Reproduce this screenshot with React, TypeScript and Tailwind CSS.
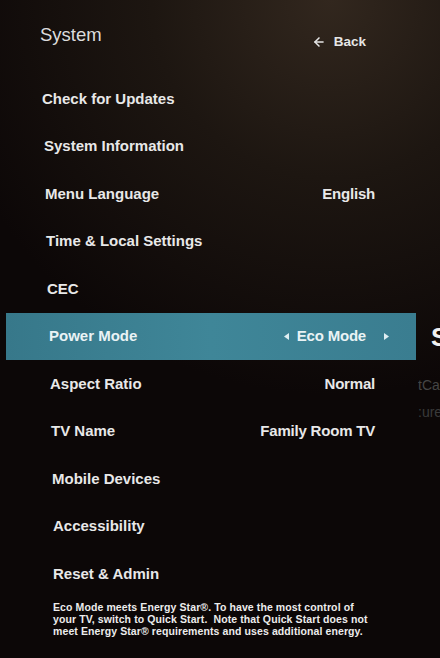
import React from "react";
import { ArrowLeft } from "lucide-react";

type Row = { label: string; value?: string; pl: string; selected?: boolean };

const rows: Row[] = [
  { label: "Check for Updates", pl: "pl-[36px]" },
  { label: "System Information", pl: "pl-[38px]" },
  { label: "Menu Language", value: "English", pl: "pl-[39px]" },
  { label: "Time & Local Settings", pl: "pl-[40px]" },
  { label: "CEC", pl: "pl-[41px]" },
  { label: "Power Mode", value: "Eco Mode", pl: "pl-[43px]", selected: true },
  { label: "Aspect Ratio", value: "Normal", pl: "pl-[44px]" },
  { label: "TV Name", value: "Family Room TV", pl: "pl-[45px]" },
  { label: "Mobile Devices", pl: "pl-[46px]" },
  { label: "Accessibility", pl: "pl-[47px]" },
  { label: "Reset & Admin", pl: "pl-[47px]" },
];

function Tri({ dir }: { dir: "l" | "r" }) {
  return (
    <svg width="5" height="7" viewBox="0 0 5 7" className="shrink-0">
      {dir === "l" ? (
        <polygon points="5,0 5,7 0,3.5" fill="#dfeef2" />
      ) : (
        <polygon points="0,0 0,7 5,3.5" fill="#dfeef2" />
      )}
    </svg>
  );
}

export default function App() {
  return (
    <div
      className="relative w-[440px] h-[658px] overflow-hidden bg-[radial-gradient(ellipse_90%_60%_at_75%_0%,#32271e_0%,#1d1611_45%,#0c0707_100%)] text-[#e8e8e8]"
      style={{ fontFamily: '"Liberation Sans", Arial, sans-serif' }}
    >
      <div className="flex items-start justify-between h-[75px] pl-[40px] pr-[74px] pt-[24px]">
        <div className="text-[18.5px] leading-[22px] text-[#dcdcdc]">System</div>
        <div className="flex items-center gap-[8px] pt-[8px] text-[13.5px] font-bold text-[#e6e6e6]">
          <ArrowLeft size={14} strokeWidth={2.6} />
          <span>Back</span>
        </div>
      </div>

      <div className="flex">
        <div className="ml-[6px] w-[410px] flex flex-col">
          {rows.map((r) => (
            <div
              key={r.label}
              className={
                "h-[47.5px] flex items-center justify-between text-[15px] font-bold " +
                r.pl +
                (r.selected
                  ? " bg-[linear-gradient(90deg,#37788a_0%,#3f8698_50%,#3a7d90_100%)] text-[#eaf3f5] pr-[27px]"
                  : " pr-[41px]")
              }
            >
              <span>{r.label}</span>
              {r.selected ? (
                <span className="flex items-center">
                  <Tri dir="l" />
                  <span className="ml-[8px] mr-[18px] tracking-[-0.2px]">{r.value}</span>
                  <Tri dir="r" />
                </span>
              ) : r.value ? (
                <span className="tracking-[-0.2px]">{r.value}</span>
              ) : null}
            </div>
          ))}
          <div className="pl-[47px] pt-[3px] text-[10.5px] leading-[12px] font-bold text-[#ececec] whitespace-nowrap tracking-[0.1px]">
            <p>Eco Mode meets Energy Star®. To have the most control of</p>
            <p>your TV, switch to Quick Start.&nbsp; Note that Quick Start does not</p>
            <p>meet Energy Star® requirements and uses additional energy.</p>
          </div>
        </div>
        <div className="ml-[2px] flex-1 overflow-hidden flex flex-col pt-[239px]">
          <div className="h-[47px] flex items-center pl-[13px] text-[26px] font-bold text-[#f0f0f0]">S</div>
          <div className="h-[32px] flex items-end text-[14px] leading-[16px] text-[#454545] whitespace-nowrap">tCa</div>
          <div className="h-[27px] flex items-end text-[14px] leading-[16px] text-[#3a3a3a] whitespace-nowrap">:ure</div>
        </div>
      </div>
    </div>
  );
}
